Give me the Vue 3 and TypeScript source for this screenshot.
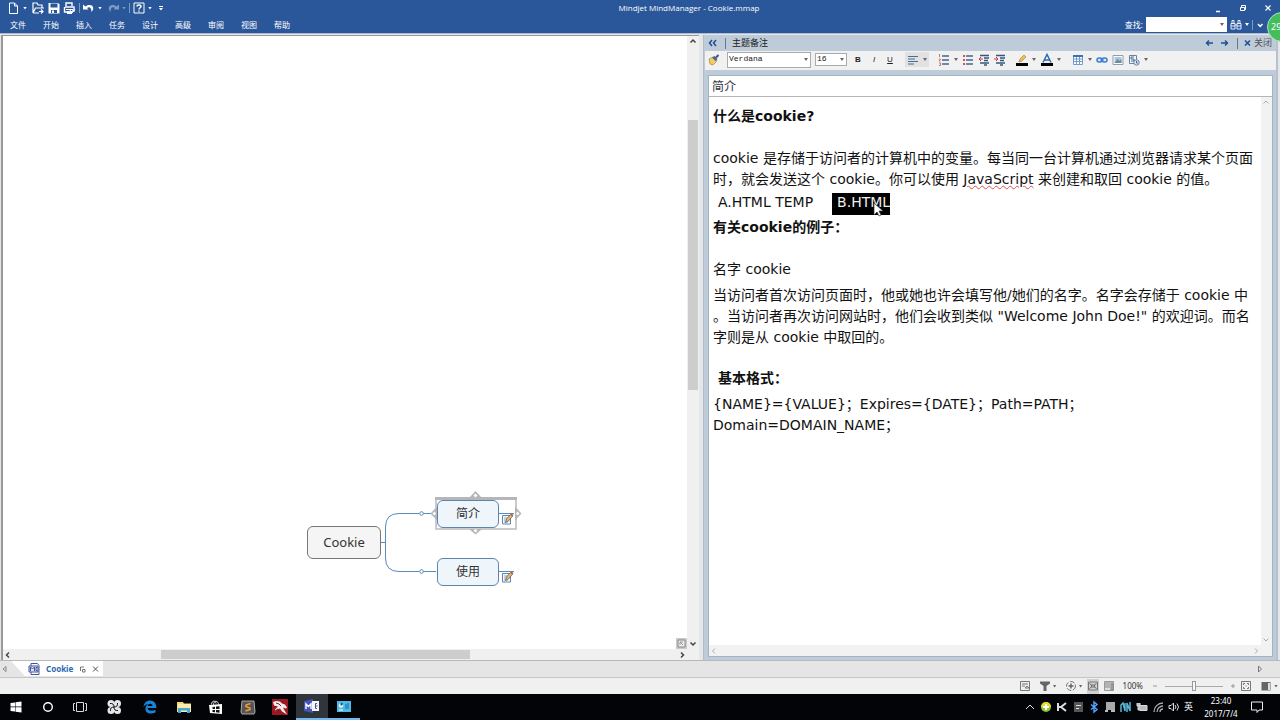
<script setup lang="ts">
import { ref } from 'vue'

const menus = ['文件', '开始', '插入', '任务', '设计', '高级', '审阅', '视图', '帮助']
const topics = ['简介', '使用']
const query = ref('')
const font = ref('Verdana')
const size = ref('16')
const zoom = ref(50)
</script>

<template>
  <div class="app">
    <header class="top">
      <div class="titlebar">
        <div class="quick">
          <button aria-label="新建"><svg width="12" height="14" viewBox="0 0 12 14"><path d="M1.500 2h5l3 3v7.500h-8zM6.500 2v3h3" fill="none" stroke="#fff" /></svg></button>
          <i class="caret light"></i>
          <button class="gap" aria-label="打开"><svg width="13" height="14" viewBox="0 0 13 14"><path d="M1 12V2h4l1 2h4v3M1 12l2.500-5H12M1 12h6M7 10.500h4M9 8.500l2 2-2 2" fill="none" stroke="#fff" stroke-width="1.200" /></svg></button>
          <button aria-label="保存"><svg width="12" height="14" viewBox="0 0 12 14"><path d="M.5 2H10l1.500 1.500V12.500H.5z" fill="#fff" /><path d="M2.500 2.500h7v4h-7zM3 9h6v3H3z" fill="#2a579a" /><path d="M4 9.500h2V12H4z" fill="#fff" /></svg></button>
          <button aria-label="打印"><svg width="13" height="14" viewBox="0 0 13 14"><path d="M3 5V2h6v3M3 6h8v4H9M2 6h2M1.500 6v5H4" fill="none" stroke="#fff" stroke-width="1.400" /><path d="M3 8h7v1H3zM4 10h5v3H4z" fill="#fff" /><path d="M7 9l2 3 3-4" fill="none" stroke="#fff" /></svg></button>
          <span class="bar"></span>
          <button aria-label="撤销"><svg width="12" height="12" viewBox="0 0 12 12"><path d="M0 2.500v5h5.500L4 6C6.500 4 8.500 5.500 8.500 10 13 5 8 .5 2.500 4.500z" fill="#fff" /></svg></button>
          <i class="caret light"></i>
          <button class="gap2 dim" aria-label="恢复"><svg width="12" height="12" viewBox="0 0 12 12"><path d="M12 2.500v5H6.500L8 6C5.500 4 3.500 5.500 3.500 10-1 5 4 .5 9.500 4.500z" fill="#fff" /></svg></button>
          <i class="caret light dim"></i>
          <span class="bar"></span>
          <button aria-label="帮助"><svg width="12" height="14" viewBox="0 0 12 14"><path d="M1 2h10v10H1z" fill="none" stroke="#fff" /><path d="M4 5.500c0-2 4-2 4 0C8 7 6 6.500 6 8.500M6 9.500v1.200" fill="none" stroke="#fff" stroke-width="1.400" /></svg></button>
          <i class="caret light"></i>
          <svg class="more" width="6" height="8" viewBox="0 0 6 8"><path d="M1 2h4v1H1zM1 4h4L3 6.500z" fill="#fff" /></svg>
        </div>
        <span class="apptitle">Mindjet MindManager - Cookie.mmap</span>
        <div class="wincontrols">
          <button aria-label="最小化"><svg width="8" height="10"><path d="M2 8.500h4" stroke="#fff" stroke-width="1.500" /></svg></button>
          <button aria-label="还原"><svg width="8" height="10"><path d="M2.500 4V2.500h4v4H5M1.500 4.500h4v3h-4z" fill="none" stroke="#fff" /></svg></button>
          <button aria-label="退出"><svg width="8" height="10"><path d="M1.500 2.500l5 5m0-5l-5 5" stroke="#fff" stroke-width="1.200" /></svg></button>
        </div>
      </div>
      <div class="menubar">
        <nav><button v-for="m in menus" :key="m">{{ m }}</button></nav>
        <div class="find">
          <label for="query">查找:</label>
          <span class="findbox"><input id="query" v-model="query" /><i class="caret"></i></span>
          <button aria-label="查找下一个"><svg width="12" height="12" viewBox="0 0 12 12"><path d="M2 1.500h2v3H2zM8 1.500h2v3H8zM1 4.500h4V10H1zM7 4.500h4V10H7zM5 6h2" fill="none" stroke="#e8eef8" /><path d="M1 7h4M7 7h4" stroke="#e8eef8" /></svg></button>
          <i class="caret light"></i>
          <span class="bar"></span>
          <button aria-label="展开"><svg width="8" height="10"><path d="M2 4l2.200 2.500L6.500 4" fill="none" stroke="#fff" stroke-width="1.500" /></svg></button>
        </div>
      </div>
      <span class="badge">29</span>
    </header>

    <main>
      <section class="map">
        <div class="canvas">
          <div class="diagram">
            <svg class="links" width="220" height="110" viewBox="0 0 220 110">
              <g fill="none" stroke="#5b8bb8"><path d="M74 53.500h4.500M129 24.500h-13M129 82.500h-13M112 24.500H92q-13.500 0-13.500 13.500v31q0 13.500 13.500 13.500h20" /><circle cx="114.500" cy="24.500" r="1.800" fill="#fff" /><circle cx="114.500" cy="82.500" r="1.800" fill="#fff" /></g>
              <path d="M129 9h80v31h-80z" fill="#fff" stroke="#b9bbbe" stroke-width="1.500" />
              <path d="M128 9.500h82" stroke="#b4b6b9" stroke-width="3" />
              <path d="M162 9l6.500-7 6.500 7zM162 40l6.500 5.500 6.500-5.500zM130 17.500l-6.500 7 6.500 7zM208 17.500l6.500 7-6.500 7z" fill="#b4b6b9" />
              <path d="M168.500 4.500l2 2-2 2-2-2zM168.500 40l2 1.500-2 2-2-2zM127.500 22.500l1.500 2-1.500 2-2-2zM210.500 22.500l2 2-2 2-1.500-2z" fill="#fff" />
              <path d="M192 24.500h15M192 82.500h15" stroke="#5b8bb8" />
              <g v-for="y in [24, 82]" :key="y" :transform="`translate(195 ${y})`"><path d="M.5 2.500h8v8.500h-8z" fill="#f5f9fd" stroke="#5c86b5" /><path d="M2 5h4M2 7h3M2 9h4" stroke="#8fa8c4" /><path d="M3.500 9.500l1-3.500 4-4.500 2 1.800-4 4.700z" fill="#e0b678" stroke="#6b5545" stroke-width=".7" /><path d="M8.500 1.500l1-1L11.500 2l-1 1.500z" fill="#c85a3d" /></g>
            </svg>
            <div class="node root">Cookie</div>
            <div v-for="(t, i) in topics" :key="t" class="node" :class="i ? 'second' : 'first'">{{ t }}</div>
          </div>
          <svg class="fit" width="11" height="11" viewBox="0 0 11 11"><path d="M0 0h11v11H0z" fill="#c9c9c9" /><path d="M2 2h7v7H2z" fill="#eee" stroke="#888" /><path d="M4 7V4h3M4 4l3 3" fill="none" stroke="#999" /></svg>
        </div>
        <div class="vscroll">
          <svg width="10" height="10"><path d="M2.500 6.500L5 4l2.500 2.500" fill="none" stroke="#444" stroke-width="1.500" /></svg>
          <div class="track"><i></i></div>
          <svg width="10" height="10"><path d="M2.500 3.500L5 6l2.500-2.500" fill="none" stroke="#444" stroke-width="1.500" /></svg>
        </div>
        <div class="hscroll">
          <svg width="10" height="10"><path d="M6 2.500L3.500 5 6 7.500" fill="none" stroke="#444" stroke-width="1.500" /></svg>
          <div class="track"><i></i></div>
          <svg width="10" height="10"><path d="M4 2.500L6.500 5 4 7.500" fill="none" stroke="#444" stroke-width="1.500" /></svg>
        </div>
      </section>

      <section class="notes">
        <div class="noteshead">
          <button aria-label="折叠"><svg width="9" height="8"><path d="M4 1L1.500 4 4 7M8 1L5.500 4 8 7" fill="none" stroke="#1e4e94" stroke-width="1.500" /></svg></button>
          <span class="bar dark"></span>
          <h2>主题备注</h2>
          <button aria-label="上一个"><svg width="8" height="8"><path d="M8 4H1.500M4 1.500L1.500 4 4 6.500" fill="none" stroke="#1e4e94" stroke-width="1.400" /></svg></button>
          <button aria-label="下一个"><svg width="8" height="8"><path d="M0 4h6.500M4 1.500L6.500 4 4 6.500" fill="none" stroke="#1e4e94" stroke-width="1.400" /></svg></button>
          <span class="bar dark"></span>
          <button class="close"><svg width="7" height="8"><path d="M1 1.500l5 5m0-5l-5 5" stroke="#1e4e94" stroke-width="1.500" /></svg>关闭</button>
        </div>
        <div class="tools">
          <button aria-label="格式刷"><svg width="12" height="12" viewBox="0 0 12 12"><path d="M1 5l4-2 4 4-4 4-3-1z" fill="#f1cb69" stroke="#a88640" stroke-width=".7" /><path d="M4 3.500L6.500 2l3 3-2 2z" fill="#48658c" /><path d="M8 3.500L10.500 1" stroke="#3b587c" stroke-width="2" /></svg></button>
          <span class="combo font"><select v-model="font" aria-label="字体"><option>Verdana</option></select><i class="caret"></i></span>
          <span class="combo size"><select v-model="size" aria-label="字号"><option>16</option></select><i class="caret"></i></span>
          <button class="fmt" aria-label="粗体"><b>B</b></button>
          <button class="fmt" aria-label="斜体"><em>I</em></button>
          <button class="fmt" aria-label="下划线"><u>U</u></button>
          <button class="align" aria-label="对齐"><svg width="12" height="10"><path d="M1 1.500h10M1 4h7M1 6.500h10M1 9h6" stroke="#476c96" /></svg><i class="caret"></i></button>
          <button class="wide" aria-label="编号"><svg width="12" height="12"><path d="M4 2h7M4 6h7M4 10h7" stroke="#43658c" stroke-width="1.300" /><path d="M1.500 0v3M1 5h1.500L1 7h1.500M1 9h1.500v2.500H1" fill="none" stroke="#c97664" /></svg><i class="caret"></i></button>
          <button aria-label="项目符号"><svg width="12" height="12"><path d="M4 2h7M4 6h7M4 10h7" stroke="#43658c" stroke-width="1.300" /><path d="M1 1h2v2H1zM1 5h2v2H1zM1 9h2v2H1z" fill="#cc5a4c" /></svg></button>
          <button aria-label="减少缩进"><svg width="12" height="12"><path d="M2 1.500h9M6 4h5M6 6.500h4M2 9h9M6 11h3" stroke="#34577e" stroke-width="1.300" /><path d="M1 5h4M3 3L1 5l2 2" fill="none" stroke="#c33e35" /></svg></button>
          <button aria-label="增加缩进"><svg width="12" height="12"><path d="M2 1.500h9M6 4h5M6 6.500h4M2 9h9M6 11h3" stroke="#34577e" stroke-width="1.300" /><path d="M0 5h4M2 3l2 2-2 2" fill="none" stroke="#c33e35" /></svg></button>
          <button class="wide hl" aria-label="突出显示"><svg width="12" height="12"><path d="M0 9h12v3H0z" fill="#000" /><path d="M3 8l1-3 4-4 2 2-4 4z" fill="#f0bf47" stroke="#947b43" stroke-width=".6" /></svg><i class="caret"></i></button>
          <button class="wide" aria-label="字体颜色"><svg width="12" height="12"><path d="M0 9h12v3H0z" fill="#000" /><path d="M2 8.500L6 .5l4 8M3.500 6h5" fill="none" stroke="#2f6cb2" stroke-width="1.500" /></svg><i class="caret"></i></button>
          <button class="wide table" aria-label="表格"><svg width="12" height="12"><path d="M1.500 2h9v8.500h-9zM1.500 5h9M1.500 7.500h9M4.500 2v8.500M7.500 2v8.500" fill="#fff" stroke="#719cce" /><path d="M1 2h10" stroke="#3971b1" stroke-width="2" /></svg><i class="caret"></i></button>
          <button aria-label="链接"><svg width="12" height="12"><rect x="1" y="4" width="5" height="4" rx="2" fill="#d8ebff" stroke="#3d7dcc" stroke-width="1.500" /><rect x="6" y="4" width="5" height="4" rx="2" fill="#d8ebff" stroke="#3d7dcc" stroke-width="1.500" /><path d="M4 6h4" stroke="#3d7dcc" /></svg></button>
          <button aria-label="图片"><svg width="12" height="12"><path d="M1 1.500h10v9H1z" fill="#fff" stroke="#8b9eb2" /><path d="M2.500 3h7v6h-7z" fill="#a8c6df" /><path d="M2.500 9l3-4 2 2 2-2v4z" fill="#70899b" /></svg></button>
          <button class="wide" aria-label="日期"><svg width="12" height="12"><path d="M1.500 1.500h7v8h-7z" fill="#f5f8fb" stroke="#6480a2" /><path d="M6 3H3v2h3v2H3" fill="none" stroke="#4d6685" /><circle cx="8.500" cy="8.500" r="2.700" fill="#dde8f6" stroke="#6581aa" /><path d="M8.500 7v2H10" fill="none" stroke="#486c9a" /></svg><i class="caret"></i></button>
        </div>
        <div class="sheet">
          <h1>简介</h1>
          <article>
            <div class="text">
              <h3>什么是cookie?</h3>
              <p class="lead">cookie 是存储于访问者的计算机中的变量。每当同一台计算机通过浏览器请求某个页面时，就会发送这个 cookie。你可以使用 <span class="spell">JavaScript</span> 来创建和取回 cookie 的值。</p>
              <p class="choice"><span>A.HTML TEMP</span><mark>B.HTML<svg class="cursor" width="11" height="16" viewBox="0 0 11 16"><path d="M1 1v12l3-3 2 4 2-1-2-4h4z" fill="#fff" stroke="#333" stroke-width=".7" /></svg></mark></p>
              <h3>有关cookie的例子：</h3>
              <p class="name">名字 cookie</p>
              <p class="detail">当访问者首次访问页面时，他或她也许会填写他/她们的名字。名字会存储于 cookie 中<br />。当访问者再次访问网站时，他们会收到类似 "Welcome John Doe!" 的欢迎词。而名字则是从 cookie 中取回的。</p>
              <h3 class="format">基本格式：</h3>
              <p>{NAME}={VALUE}；Expires={DATE}；Path=PATH；<br />Domain=DOMAIN_NAME；</p>
            </div>
            <div class="nvscroll"><svg width="10" height="10"><path d="M2.500 6.500L5 4l2.500 2.500" fill="none" stroke="#aaa" /></svg><svg width="10" height="10"><path d="M2.500 3.500L5 6l2.500-2.500" fill="none" stroke="#aaa" /></svg></div>
            <div class="nhscroll"><svg width="10" height="10"><path d="M6 2.500L3.500 5 6 7.500" fill="none" stroke="#aaa" /></svg><svg width="10" height="10"><path d="M4 2.500L6.500 5 4 7.500" fill="none" stroke="#aaa" /></svg></div>
            <div class="corner"></div>
          </article>
        </div>
      </section>
    </main>

    <div class="tabs">
      <svg width="8" height="10"><path d="M6 2.500L3 5l3 2.500z" fill="none" stroke="#888" /></svg>
      <div class="tab">
        <svg width="12" height="12"><path d="M3 .5h6.500l1.500 2v9H3z" fill="#fff" stroke="#40549b" /><path d="M1 3h9v6H1z" fill="#dfe4f4" stroke="#40549b" /><path d="M2.500 8V4l2 2 2-2v4M9.500 4.500H8v3h1.500" fill="none" stroke="#40549b" /></svg>
        <b>Cookie</b>
        <button aria-label="浮动"><svg width="7" height="8"><path d="M1.500 6V2H5M3.500 4.500H6V7H3.500z" fill="none" stroke="#777" /></svg></button>
        <button aria-label="关闭文档"><svg width="7" height="8"><path d="M1 1.500l5 5m0-5l-5 5" stroke="#555" /></svg></button>
      </div>
      <svg class="tr" width="8" height="10"><path d="M2.500 2l3 3-3 3z" fill="none" stroke="#777" /></svg>
    </div>

    <footer class="status">
      <button aria-label="备注"><svg width="12" height="12"><path d="M1.500 1.500h9v9h-9zM3 4h6M3 6h3M6 8l2-2 2 2M6 8h4" fill="none" stroke="#777" /></svg></button>
      <button class="filter" aria-label="筛选"><svg width="12" height="12"><path d="M1 1.500h10v2L7.500 6v5h-3V6L1 3.500z" fill="#666" /></svg><i class="caret"></i></button>
      <button class="filter" aria-label="详细级别"><svg width="12" height="12"><circle cx="6" cy="6" r="4.500" fill="none" stroke="#777" stroke-dasharray="5 1.500" /><path d="M6 3.500v5M3.500 6h5" stroke="#666" stroke-width="1.500" /></svg><i class="caret"></i></button>
      <button class="on" aria-label="导图视图"><svg width="12" height="12"><path d="M1.500 2h9v8h-9z" fill="none" stroke="#777" /><path d="M4.500 5h3v2h-3zM2.500 3.500l2 1.500M9.500 3.500l-2 1.500M2.500 8.500l2-1.500M9.500 8.500l-2-1.500" fill="none" stroke="#666" /></svg></button>
      <button aria-label="大纲视图"><svg width="12" height="12"><path d="M1.500 1.500h9v9h-9z" fill="#ddd" stroke="#999" /><path d="M2 3h8M2 5h5M2 7h5M8 4h2v6H8z" stroke="#888" fill="#aaa" /></svg></button>
      <span class="percent">100%</span>
      <button aria-label="缩小"><svg width="6" height="8"><path d="M1 4h4" stroke="#999" /></svg></button>
      <input v-model="zoom" type="range" aria-label="缩放" />
      <button aria-label="放大"><svg width="6" height="8"><path d="M1 4h4M3 2v4" stroke="#999" /></svg></button>
      <button class="fitbtn" aria-label="适合窗口"><svg width="12" height="12"><path d="M1.500 1.500h9v9h-9z" fill="none" stroke="#777" /><path d="M3.500 5V3.500H5M8.500 5V3.500H7M3.500 7v1.500H5M8.500 7v1.500H7M5.500 6h1" fill="none" stroke="#777" /></svg></button>
      <button class="pane" aria-label="任务窗格"><svg width="10" height="10"><path d="M.5 1h9v8.500h-9z" fill="#666" /><path d="M7 2h2v7H7z" fill="#ddd" /></svg><i class="caret"></i></button>
    </footer>

    <div class="taskbar">
      <button aria-label="开始菜单"><svg width="12" height="12"><path d="M.5 2l4.500-.6v4.200H.5zM5.500 1.300L11.500.5v5.100h-6zM.5 6.200H5v4.300L.5 9.900zM5.500 6.200h6v5.300l-6-.8z" fill="#fff" /></svg></button>
      <button aria-label="搜索"><svg width="12" height="12"><circle cx="6" cy="6" r="4.300" fill="none" stroke="#fff" stroke-width="1.400" /></svg></button>
      <button aria-label="任务视图"><svg width="14" height="12"><path d="M3.500 1.500h7v9h-7zM2 2.500H.5v7H2M12 2.500h1.500v7H12" fill="none" stroke="#ddd" /></svg></button>
      <button aria-label="搜狗"><svg width="16" height="16"><g fill="#e6e6e6"><circle cx="5" cy="4.500" r="3.500" /><circle cx="11.500" cy="4.500" r="3.500" /><circle cx="5" cy="11.500" r="3.500" /><circle cx="11.500" cy="11.500" r="3.500" /><circle cx="8" cy="8" r="3" /></g><path d="M8 8Q8 4 4 4.500M8 8q4 0 3.500-4M8 8q0 4 4 3.500M8 8q-4 0-3.500 4" stroke="#111" fill="none" /></svg></button>
      <button aria-label="Edge"><svg width="14" height="14"><path d="M.5 7C1 2.500 4 .5 7 .5c4 0 6.500 3 6.500 7.500h-9c.3 3 4.500 3.500 8 1.700v2.700C7 15 2 13 2.500 8.500 2.700 6 4 4.500 6 4 3.500 4 1.500 5 .5 7zM4.700 6H9.500C9 3 5.500 3 4.700 6z" fill="#1684d9" /></svg></button>
      <button aria-label="资源管理器"><svg width="15" height="13"><path d="M0 1h6l1 1.500h7V11H0z" fill="#f5d778" /><path d="M1 3h13v8H1z" fill="#ffeab0" /><path d="M1 7h12v5h-3V9.500H4V12H1z" fill="#48a9cf" /></svg></button>
      <button aria-label="应用商店"><svg width="14" height="15"><path d="M0 5l13-1v10L1 13z" fill="#fff" /><path d="M4.500 5c0-5 5-5 5 0M2.500 4.500c0-4 4-4.500 4.500-1" fill="none" stroke="#ddd" /><path d="M3.500 7L6 6.700v2.200H3.500zM7 6.600l3.500-.4v2.700H7zM3.500 10H6v2.200L3.500 12zM7 10h3.500v2.700L7 12.300z" fill="#111" /></svg></button>
      <button aria-label="Sublime Text"><svg width="16" height="15"><path d="M2 1h12l1 11-1 2H2l-1-2z" fill="#555" stroke="#aaa" /><path d="M10.500 3.500L6 5v1.500L10 8v1.500L5.500 11" fill="none" stroke="#f39b35" stroke-width="1.500" /></svg></button>
      <button aria-label="游戏"><svg width="16" height="16"><path d="M0 0h16v16H0z" fill="#9b1820" /><path d="M1 3l3-1 4 .5 2 2 3 1 2 3-1 1-3-1 1 2 3 5-5-3-2-3-3 1-2 2v-2l3-3-4-1z" fill="#eee" /><path d="M4 4l3 1 2 2M3 12l3-2" fill="none" stroke="#8b222a" /></svg></button>
      <button class="active" aria-label="MindManager"><svg width="16" height="14"><path d="M0 2l9-2v14l-9-2z" fill="#4455b5" /><path d="M8 2h7v10H8z" fill="#f5f7ff" /><path d="M2 10V5l2.500 2.500L7 5v5" fill="none" stroke="#fff" stroke-width="1.400" /><path d="M13 4.500h-1.500v5H13M11.500 7h2" fill="none" stroke="#4455a0" /></svg></button>
      <button class="running" aria-label="控制面板"><svg width="14" height="11"><path d="M0 0h14v11H0z" fill="#4dbae7" /><circle cx="4" cy="4.500" r="2.300" fill="#d9f3fc" /><path d="M4 4.500V2l2 1M9 3v5M11 2v6" stroke="#176ca1" /><path d="M2 9h4" stroke="#fff" /></svg></button>
      <div class="tray">
        <svg width="12" height="12"><path d="M2 8l4-4 4 4" fill="none" stroke="#ddd" /></svg>
        <svg width="12" height="12"><circle cx="6" cy="6" r="5" fill="#8bc931" /><path d="M1 6a5 5 0 0 1 10 0z" fill="#ecd62c" /><path d="M6 3v6M3 6h6" stroke="#fff" stroke-width="2" /></svg>
        <svg width="12" height="12"><path d="M2 2v8M2 6h3l5-4M5 6l5 4" fill="none" stroke="#ddd" stroke-width="2" /></svg>
        <svg width="12" height="12"><path d="M2 1h9v10H2z" fill="#555" /><path d="M4 4.500h5M4 7.500h3" stroke="#ddd" /></svg>
        <svg width="12" height="12"><path d="M3 3.500l6 5L6 11V1l3 2.500-6 5" fill="none" stroke="#53a7ff" stroke-width="1.400" /></svg>
        <svg width="12" height="12"><path d="M2 1h9v8H2z" fill="#aaa" /><path d="M1 10h3M7 10h4" stroke="#bbb" stroke-width="2" /></svg>
        <svg width="12" height="12"><path d="M1 11V4l2-2 2 8V2M7 11V2l3 8V1" fill="none" stroke="#58b5d5" stroke-width="1.500" /></svg>
        <svg width="12" height="12"><path d="M3 4.500h8v5H4zM1 2v3h3V2M2 5v4h2" fill="#bbb" stroke="#ddd" /></svg>
        <svg width="12" height="12"><path d="M2 11A9 9 0 0 1 11 2M5 11a6 6 0 0 1 6-6M8 11a3 3 0 0 1 3-3" fill="none" stroke="#aaa" stroke-width="1.300" /></svg>
        <svg width="12" height="12"><path d="M1 4.500h2L5.500 2v8L3 7.500H1zM7 4q2 2 0 4M9 2.500q3 3.500 0 7" fill="none" stroke="#ddd" /></svg>
        <span class="ime">英</span>
      </div>
      <time datetime="2017-07-04T23:40">23:40<br />2017/7/4</time>
      <button class="action" aria-label="通知"><svg width="14" height="14"><path d="M1.500 2h11v8H9l-2 2.500V10H1.500z" fill="none" stroke="#eee" /></svg></button>
    </div>
  </div>
</template>

<style>
html, body { margin: 0; background: #e5e5e5; }
</style>

<style scoped>
* { box-sizing: border-box; }
.app { height: 100vh; display: grid; grid-template-rows: 34px minmax(0, 1fr) 17px 16px 26px; overflow: hidden; font: 8px/12px "Noto Sans", "Noto Sans CJK SC", sans-serif; color: #333; background: #e6e6e6; }
button { border: 0; padding: 0; margin: 0; background: none; font: inherit; color: inherit; display: flex; align-items: center; justify-content: center; flex: none; }
svg { display: block; flex: none; overflow: visible; }
h1, h2, h3, p { margin: 0; }
.caret { display: inline-block; flex: none; width: 4px; height: 3px; background: #666; clip-path: polygon(0 0, 100% 0, 50% 100%); }
.caret.light { background: #fff; }
.dim { opacity: .4; }
.bar { width: 1px; height: 10px; background: #7d9bc8; flex: none; }
.bar.dark { background: #66788d; height: 11px; }

.top { position: relative; background: #2a579a; color: #fff; border-bottom: 1px solid #aebdd1; }
.titlebar { height: 16px; display: flex; align-items: center; }
.quick { display: flex; align-items: center; gap: 3px; padding-left: 8px; }
.quick .gap, .quick .gap2 { margin-left: 2px; }
.quick .more { margin-left: 3px; }
.apptitle { flex: 1; text-align: center; white-space: nowrap; font-family: "Open Sans", sans-serif; }
.wincontrols { display: flex; gap: 17px; justify-content: flex-end; padding-right: 8px; }
.menubar { height: 17px; display: flex; justify-content: space-between; align-items: center; }
.menubar nav { display: flex; padding-left: 10px; gap: 17px; }
.menubar nav button { width: 16px; white-space: nowrap; }
.find { display: flex; align-items: center; gap: 3px; padding-right: 16px; }
.findbox { width: 81px; height: 15px; background: #fff; display: flex; align-items: center; padding-right: 3px; }
.findbox input { border: 0; outline: 0; padding: 0; min-width: 0; flex: 1; background: none; }
.badge { position: absolute; z-index: 3; right: -17px; top: 12px; width: 30px; height: 30px; border: 1px solid #b6dec0; border-radius: 50%; background: #43be5b; font-size: 9px; line-height: 28px; padding-left: 3px; }

main { display: grid; grid-template-columns: minmax(0, 699fr) minmax(0, 575fr); gap: 4px; padding-top: 1px; overflow: hidden; border-bottom: 1px solid #b9b9b9; padding-right: 2px; }
.map { display: grid; grid-template-columns: minmax(0, 1fr) 12px; grid-template-rows: minmax(0, 1fr) 11px; border-left: 2px solid #999; border-top: 1px solid #999; margin-left: 1px; background: #f0f0f0; }
.canvas { position: relative; background: #fff; overflow: hidden; }
.diagram { position: absolute; left: 304px; top: 453px; width: 220px; height: 110px; }
.links { position: absolute; left: 0; top: 0; }
.node { position: absolute; left: 130px; width: 62px; height: 28px; border: 1px solid #5c84ad; border-radius: 6px; background: #eff6fb; font-size: 12px; line-height: 26px; text-align: center; }
.node.root { left: 0; top: 37px; width: 74px; height: 33px; background: #f5f5f5; border-color: #777; font-size: 13px; line-height: 31px; }
.node.first { top: 11px; }
.node.second { top: 69px; }
.fit { position: absolute; right: 0; bottom: 0; }
.vscroll { display: flex; flex-direction: column; align-items: center; }
.track { flex: 1; position: relative; }
.vscroll .track { width: 10px; }
.vscroll .track i { position: absolute; left: 0; right: 0; top: 12.500%; height: 45.500%; background: #cdcdcd; }
.hscroll { display: flex; align-items: center; }
.hscroll .track { height: 9px; }
.hscroll .track i { position: absolute; top: 0; bottom: 0; left: 22.300%; width: 46.500%; background: #cdcdcd; }

.notes { display: flex; flex-direction: column; min-width: 0; background: #becbd9; border-left: 1px solid #aebccb; border-right: 2px solid #b4c2d0; }
.noteshead { height: 16px; display: flex; align-items: center; padding: 0 4px; gap: 8px; font-size: 9px; }
.noteshead .bar.dark { margin-right: -2px; }
h2 { font-size: 9px; line-height: 14px; font-weight: 400; flex: 1; color: #222; }
.close { gap: 3px; font-size: 9px; color: #555; }
.tools { height: 19px; margin-left: 1px; display: flex; align-items: center; gap: 4px; padding: 0 0 2px 3px; background: #f1f1f1; font: 8px/12px "Liberation Sans", sans-serif; }
.combo { display: flex; align-items: center; height: 16px; border: 1px solid #ababab; background: #fff; padding: 0 2px 0 0; }
.combo select { appearance: none; flex: 1; min-width: 0; border: 0; padding: 0 0 2px 1px; background: none; outline: 0; font: 8px/12px "Liberation Mono", monospace; color: #222; }
.combo.font { width: 84px; margin-left: 3px; }
.combo.size { width: 32px; height: 13px; margin-right: 1px; }
.fmt { width: 12px; font-size: 8px; color: #222; }
.align { gap: 4px; height: 15px; width: 24px; background: #e1e1e1; margin: 0 5px; }
.wide { gap: 4px; }
.tools .hl { margin: 0 1px 0 6px; }
.tools .table { margin-left: 7px; }
.sheet { flex: 1; min-height: 0; margin: 5px 3px 3px 4px; display: flex; flex-direction: column; border: 1px solid #a4b3c1; background: #fff; }
h1 { height: 21px; border-bottom: 1px solid #b5b5b5; font: 400 12px/20px "Noto Sans CJK SC", sans-serif; padding-left: 3px; color: #334; flex: none; }
article { flex: 1; min-height: 0; display: grid; grid-template-columns: minmax(0, 1fr) 11px; grid-template-rows: minmax(0, 1fr) 11px; }
.text { padding: 9px 0 0 4px; overflow: hidden; font: 14px/21px "DejaVu Sans", "Noto Sans CJK SC", sans-serif; color: #111; }
h3 { font: inherit; font-weight: 700; }
.lead { margin-top: 21px; line-break: anywhere; }
.choice { display: flex; align-items: flex-start; gap: 19px; padding: 3px 0 3px 5px; height: 27px; line-height: 19px; }
mark { position: relative; background: #000; color: #eee; padding-left: 5px; height: 22px; }
.cursor { position: absolute; left: 41px; top: 9px; }
.spell { text-decoration: underline wavy 1px #e05050; text-underline-offset: 1px; }
.name { margin-top: 21px; }
.detail { margin-top: 5px; line-break: anywhere; }
.format { margin: 20px 0 5px 5px; }
.nvscroll, .nhscroll, .corner { display: flex; justify-content: space-between; background: #f2f2f2; }
.nvscroll { flex-direction: column; }
.nhscroll { align-items: center; }

.tabs { display: flex; background: #e5e5e5; border-bottom: 1px solid #c5c5c5; align-items: center; }
.tab { display: flex; align-items: center; gap: 6px; height: 15px; margin-left: 3px; padding: 0 4px 0 17px; background: #fff; clip-path: polygon(0 0, 100% 0, 100% 100%, 14px 100%); align-self: flex-start; color: #2869b1; }
.tr { margin-left: auto; margin-right: 16px; }
.status { display: flex; align-items: center; justify-content: flex-end; background: #f0f0f0; gap: 4px; padding-right: 2px; }
.filter { gap: 2px; margin-left: 4px; }
.status .on { background: #d0d0d0; height: 15px; }
.percent { margin: 0 5px 0 4px; }
.status input { appearance: none; width: 58px; height: 11px; margin: 0 3px; background: linear-gradient(#aaa, #aaa) center / 100% 1px no-repeat; }
.status input::-webkit-slider-thumb { appearance: none; width: 4px; height: 10px; border: 1px solid #999; background: #f8f8f8; }
.pane { gap: 3px; margin-left: 5px; }
.taskbar { background: #020408; color: #fff; display: flex; }
.taskbar > button { width: 32px; }
.taskbar > button:nth-child(4), .taskbar > button:nth-child(5) { width: 36px; }
.taskbar > .active { background: #30343b; border-bottom: 2px solid #75b8ed; }
.taskbar > .running { border-bottom: 2px solid #75b8ed; }
.tray { margin-left: auto; display: flex; gap: 4px; align-items: center; }
.ime { font-size: 9px; width: 12px; }
time { width: 40px; margin-left: 5px; text-align: center; line-height: 13px; white-space: nowrap; }
.taskbar > .action { margin-right: 7px; }
</style>
